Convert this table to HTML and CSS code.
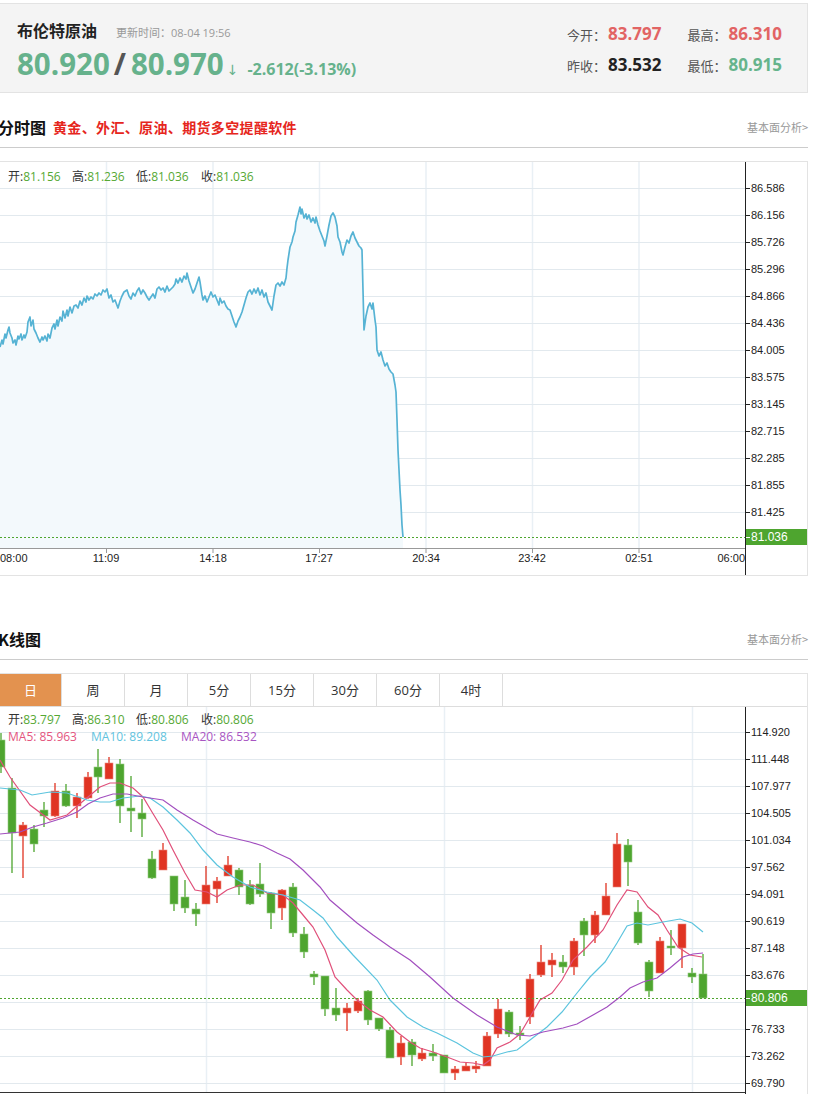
FILE: index.html
```html
<!DOCTYPE html>
<html lang="zh-CN">
<head>
<meta charset="utf-8">
<title>布伦特原油</title>
<link rel="stylesheet" href="styles.css">
</head>
<body>
<div class="page">
  <section class="quote">
    <div class="quote-left">
      <div class="title-row">
        <span class="name">布伦特原油</span>
        <span class="update">更新时间：08-04 19:56</span>
      </div>
      <div class="price-row">
        <span class="px">80.920</span><span class="slash">/</span><span class="px">80.970</span><span class="arrow">↓</span><span class="chg">-2.612(-3.13%)</span>
      </div>
    </div>
    <div class="quote-right">
      <div class="stat"><span class="lbl">今开：</span><span class="val red">83.797</span></div>
      <div class="stat"><span class="lbl">最高：</span><span class="val red">86.310</span></div>
      <div class="stat"><span class="lbl">昨收：</span><span class="val dark">83.532</span></div>
      <div class="stat"><span class="lbl">最低：</span><span class="val green">80.915</span></div>
    </div>
  </section>

  <div class="sec-bar">
    <div class="sec-left"><span class="sec-title">分时图</span><span class="sec-promo">黄金、外汇、原油、期货多空提醒软件</span></div>
    <span class="sec-link">基本面分析&gt;</span>
  </div>

  <div class="chart-box">
    <svg class="chart" width="807" height="413" viewBox="0 162 807 413">
      <path class="grid-v" d="M106.5,162V548 M213,162V548 M319.5,162V548 M426,162V548 M532.5,162V548 M639,162V548"/>
      <path class="grid-h" d="M0,188.5H745 M0,215.5H745 M0,242.5H745 M0,269.5H745 M0,296.5H745 M0,323.5H745 M0,350.5H745 M0,377.5H745 M0,404.5H745 M0,431.5H745 M0,458.5H745 M0,485.5H745 M0,512.5H745"/>
      <path class="area" d="M0,347 L2,340 3,344 5,334 6,338 8,330 9,327 10,333 12,338 13,343 15,340 16,345 18,336 19,339 21,334 22,340 24,335 25,338 27,332 28,322 30,317 31,326 33,320 34,329 36,333 38,338 40,342 42,337 43,340 45,336 47,341 48,334 50,338 52,328 54,324 55,329 57,320 58,326 60,317 62,321 63,311 65,318 67,310 68,316 70,307 72,313 74,306 76,305 78,308 80,301 82,305 84,298 86,302 87,296 89,300 91,297 93,299 95,294 97,296 99,293 101,295 103,290 105,292 107,289 109,298 111,295 113,302 115,300 118,308 120,301 122,296 124,292 127,290 129,296 131,299 133,293 135,296 137,291 139,288 141,294 143,290 145,293 147,297 149,300 151,297 153,294 155,298 157,289 159,287 161,290 163,288 165,292 167,286 169,291 171,289 173,287 175,284 176,279 178,283 180,278 182,282 184,276 186,279 187,273 189,281 191,287 193,293 195,289 197,283 199,277 200,282 202,295 203,300 205,296 207,302 209,297 211,292 213,297 215,295 217,300 219,305 220,298 222,303 224,301 226,306 228,309 230,310 232,316 234,322 236,327 238,321 240,317 242,312 244,305 246,298 248,292 250,290 252,294 254,289 256,293 258,288 260,295 262,290 264,297 266,293 268,302 270,306 272,310 274,296 276,285 278,283 280,286 282,282 284,285 286,278 287,268 288,260 290,247 292,242 293,237 295,231 296,222 298,215 300,207 301,214 302,209 304,218 306,214 307,219 309,215 311,222 313,218 315,223 316,217 318,225 320,231 322,236 324,241 325,246 327,236 329,225 331,216 333,213 335,217 337,226 338,237 340,242 342,252 343,255 345,247 347,240 349,243 351,236 353,232 355,238 357,242 359,246 361,248 362,250 363,290 364,330 366,316 368,307 370,303 372,309 373,303 375,320 376,327 377,350 379,356 381,352 383,360 385,366 387,363 389,369 391,372 393,374 395,385 396,392 397,420 398,450 399,470 400,490 401,505 402,525 403,537 L403,548 L0,548 Z"/>
      <polyline class="tline" points="0,347 2,340 3,344 5,334 6,338 8,330 9,327 10,333 12,338 13,343 15,340 16,345 18,336 19,339 21,334 22,340 24,335 25,338 27,332 28,322 30,317 31,326 33,320 34,329 36,333 38,338 40,342 42,337 43,340 45,336 47,341 48,334 50,338 52,328 54,324 55,329 57,320 58,326 60,317 62,321 63,311 65,318 67,310 68,316 70,307 72,313 74,306 76,305 78,308 80,301 82,305 84,298 86,302 87,296 89,300 91,297 93,299 95,294 97,296 99,293 101,295 103,290 105,292 107,289 109,298 111,295 113,302 115,300 118,308 120,301 122,296 124,292 127,290 129,296 131,299 133,293 135,296 137,291 139,288 141,294 143,290 145,293 147,297 149,300 151,297 153,294 155,298 157,289 159,287 161,290 163,288 165,292 167,286 169,291 171,289 173,287 175,284 176,279 178,283 180,278 182,282 184,276 186,279 187,273 189,281 191,287 193,293 195,289 197,283 199,277 200,282 202,295 203,300 205,296 207,302 209,297 211,292 213,297 215,295 217,300 219,305 220,298 222,303 224,301 226,306 228,309 230,310 232,316 234,322 236,327 238,321 240,317 242,312 244,305 246,298 248,292 250,290 252,294 254,289 256,293 258,288 260,295 262,290 264,297 266,293 268,302 270,306 272,310 274,296 276,285 278,283 280,286 282,282 284,285 286,278 287,268 288,260 290,247 292,242 293,237 295,231 296,222 298,215 300,207 301,214 302,209 304,218 306,214 307,219 309,215 311,222 313,218 315,223 316,217 318,225 320,231 322,236 324,241 325,246 327,236 329,225 331,216 333,213 335,217 337,226 338,237 340,242 342,252 343,255 345,247 347,240 349,243 351,236 353,232 355,238 357,242 359,246 361,248 362,250 363,290 364,330 366,316 368,307 370,303 372,309 373,303 375,320 376,327 377,350 379,356 381,352 383,360 385,366 387,363 389,369 391,372 393,374 395,385 396,392 397,420 398,450 399,470 400,490 401,505 402,525 403,537"/>
      <path class="dotted" d="M0,537.5H745"/>
      <path class="axis-x" d="M0,548.5H745 M106.5,548V553 M213,548V553 M319.5,548V553 M426,548V553 M532.5,548V553 M639,548V553"/>
      <text class="tick" y="562" x="0">08:00</text>
      <text class="tick mid" y="562" x="106">11:09</text>
      <text class="tick mid" y="562" x="213">14:18</text>
      <text class="tick mid" y="562" x="319">17:27</text>
      <text class="tick mid" y="562" x="426">20:34</text>
      <text class="tick mid" y="562" x="532">23:42</text>
      <text class="tick mid" y="562" x="639">02:51</text>
      <text class="tick end" y="562" x="745">06:00</text>
      <path class="axis-y" d="M745.5,162V575 M745,188.5H750 M745,215.5H750 M745,242.5H750 M745,269.5H750 M745,296.5H750 M745,323.5H750 M745,350.5H750 M745,377.5H750 M745,404.5H750 M745,431.5H750 M745,458.5H750 M745,485.5H750 M745,512.5H750"/>
      <text class="tick" x="751" y="192">86.586</text>
      <text class="tick" x="751" y="219">86.156</text>
      <text class="tick" x="751" y="246">85.726</text>
      <text class="tick" x="751" y="273">85.296</text>
      <text class="tick" x="751" y="300">84.866</text>
      <text class="tick" x="751" y="327">84.436</text>
      <text class="tick" x="751" y="354">84.005</text>
      <text class="tick" x="751" y="381">83.575</text>
      <text class="tick" x="751" y="408">83.145</text>
      <text class="tick" x="751" y="435">82.715</text>
      <text class="tick" x="751" y="462">82.285</text>
      <text class="tick" x="751" y="489">81.855</text>
      <text class="tick" x="751" y="516">81.425</text>
      <rect class="cur-box" x="746" y="529" width="61" height="16"/>
      <path class="cur-tick" d="M746,537.5H750"/>
      <text class="cur-text" x="751" y="541">81.036</text>
      <text class="info" y="181"><tspan x="8">开:</tspan><tspan class="iv">81.156</tspan><tspan x="72">高:</tspan><tspan class="iv">81.236</tspan><tspan x="136">低:</tspan><tspan class="iv">81.036</tspan><tspan x="201">收:</tspan><tspan class="iv">81.036</tspan></text>
    </svg>
  </div>

  <div class="sec-bar sec-bar-k">
    <div class="sec-left"><span class="sec-title">K线图</span></div>
    <span class="sec-link">基本面分析&gt;</span>
  </div>

  <div class="kbox">
    <div class="tabs">
      <span class="tab active">日</span>
      <span class="tab">周</span>
      <span class="tab">月</span>
      <span class="tab">5分</span>
      <span class="tab">15分</span>
      <span class="tab">30分</span>
      <span class="tab">60分</span>
      <span class="tab">4时</span>
    </div>
    <svg class="chart" width="807" height="400" viewBox="0 707 807 400">
      <path class="grid-v" d="M206.5,707V1092 M444.5,707V1092 M692.5,707V1092"/>
      <path class="grid-h" d="M0,732.5H745 M0,759.5H745 M0,786.5H745 M0,813.5H745 M0,840.5H745 M0,867.5H745 M0,894.5H745 M0,921.5H745 M0,948.5H745 M0,975.5H745 M0,1002.5H745 M0,1029.5H745 M0,1056.5H745 M0,1083.5H745"/>
      <g class="k-up">
        <path d="M23,822V878 M55,783V817 M77,793V818 M88,772V799 M109,757V779 M163,843V870 M206,866V904 M217,877V903 M228,856V876 M282,889V920 M347,1003V1031 M358,998V1013 M401,1036V1065 M422,1048V1061 M455,1066V1080 M466,1063V1071 M476,1061V1073 M487,1032V1066 M498,999V1038 M530,974V1024 M541,945V977 M552,953V977 M574,938V975 M595,911V943 M606,883V915 M617,833V887 M660,937V973 M682,924V968"/>
        <rect x="19" y="825" width="8" height="11"/>
        <rect x="51" y="791" width="8" height="25"/>
        <rect x="73" y="797" width="8" height="9"/>
        <rect x="84" y="777" width="8" height="21"/>
        <rect x="105" y="763" width="8" height="16"/>
        <rect x="159" y="850" width="8" height="20"/>
        <rect x="202" y="885" width="8" height="19"/>
        <rect x="213" y="881" width="8" height="8"/>
        <rect x="224" y="865" width="8" height="11"/>
        <rect x="278" y="890" width="8" height="18"/>
        <rect x="343" y="1008" width="8" height="5"/>
        <rect x="354" y="1001" width="8" height="10"/>
        <rect x="397" y="1043" width="8" height="14"/>
        <rect x="418" y="1053" width="8" height="6"/>
        <rect x="451" y="1069" width="8" height="4"/>
        <rect x="462" y="1066" width="8" height="5"/>
        <rect x="472" y="1066" width="8" height="3"/>
        <rect x="483" y="1036" width="8" height="30"/>
        <rect x="494" y="1009" width="8" height="25"/>
        <rect x="526" y="979" width="8" height="38"/>
        <rect x="537" y="962" width="8" height="13"/>
        <rect x="548" y="960" width="8" height="5"/>
        <rect x="570" y="941" width="8" height="26"/>
        <rect x="591" y="915" width="8" height="20"/>
        <rect x="602" y="896" width="8" height="19"/>
        <rect x="613" y="844" width="8" height="43"/>
        <rect x="656" y="941" width="8" height="32"/>
        <rect x="678" y="924" width="8" height="24"/>
      </g>
      <g class="k-dn">
        <path d="M1,733V773 M12,778V873 M34,825V852 M44,802V827 M66,784V807 M98,749V793 M120,759V823 M131,776V832 M142,799V837 M152,851V879 M174,876V911 M185,880V913 M196,903V926 M239,868V895 M250,880V905 M260,863V897 M271,892V929 M293,883V937 M304,927V958 M314,971V985 M325,976V1016 M336,988V1021 M368,990V1025 M379,1018V1031 M390,1027V1058 M412,1039V1066 M433,1044V1061 M444,1055V1073 M509,1010V1037 M520,1026V1040 M563,955V973 M584,918V956 M628,839V886 M638,900V945 M649,960V997 M671,930V955 M692,968V983 M703,954V998"/>
        <rect x="-3" y="740" width="8" height="27"/>
        <rect x="8" y="788" width="8" height="45"/>
        <rect x="30" y="829" width="8" height="15"/>
        <rect x="40" y="810" width="8" height="6"/>
        <rect x="62" y="791" width="8" height="15"/>
        <rect x="94" y="767" width="8" height="10"/>
        <rect x="116" y="764" width="8" height="42"/>
        <rect x="127" y="808" width="8" height="3"/>
        <rect x="138" y="813" width="8" height="6"/>
        <rect x="148" y="859" width="8" height="19"/>
        <rect x="170" y="876" width="8" height="28"/>
        <rect x="181" y="897" width="8" height="11"/>
        <rect x="192" y="909" width="8" height="5"/>
        <rect x="235" y="870" width="8" height="17"/>
        <rect x="246" y="885" width="8" height="19"/>
        <rect x="256" y="884" width="8" height="10"/>
        <rect x="267" y="893" width="8" height="20"/>
        <rect x="289" y="887" width="8" height="46"/>
        <rect x="300" y="934" width="8" height="18"/>
        <rect x="310" y="974" width="8" height="3"/>
        <rect x="321" y="976" width="8" height="33"/>
        <rect x="332" y="1008" width="8" height="7"/>
        <rect x="364" y="991" width="8" height="29"/>
        <rect x="375" y="1018" width="8" height="11"/>
        <rect x="386" y="1030" width="8" height="28"/>
        <rect x="408" y="1042" width="8" height="13"/>
        <rect x="429" y="1053" width="8" height="3"/>
        <rect x="440" y="1055" width="8" height="18"/>
        <rect x="505" y="1012" width="8" height="22"/>
        <rect x="516" y="1033" width="8" height="2"/>
        <rect x="559" y="962" width="8" height="5"/>
        <rect x="580" y="921" width="8" height="14"/>
        <rect x="624" y="845" width="8" height="17"/>
        <rect x="634" y="912" width="8" height="31"/>
        <rect x="645" y="962" width="8" height="29"/>
        <rect x="667" y="946" width="8" height="2"/>
        <rect x="688" y="973" width="8" height="4"/>
        <rect x="699" y="974" width="8" height="24"/>
      </g>
      <polyline class="ma5" points="0,760 10,777 30,805 50,820 67,815 82,802 100,787 110,783 120,783 133,788 143,797 152,812 163,830 173,850 185,873 195,890 207,892 217,897 227,890 240,885 253,885 267,893 283,895 293,903 303,915 313,927 325,950 335,977 347,990 357,1000 370,1010 383,1017 397,1032 410,1042 420,1048 433,1052 447,1057 460,1062 473,1063 483,1065 490,1060 497,1048 510,1042 520,1034 530,1017 540,1000 552,993 562,980 573,960 587,947 603,930 617,905 627,890 637,892 648,907 658,915 667,930 678,947 690,955 702,957"/>
      <polyline class="ma10" points="0,788 20,790 32,795 50,792 67,793 87,800 100,802 110,802 123,798 140,796 150,798 163,807 177,820 190,833 203,850 217,865 233,877 250,887 267,892 283,895 300,900 313,910 323,918 337,937 353,955 377,980 390,1000 407,1017 423,1027 437,1033 457,1043 473,1053 483,1057 493,1056 507,1052 517,1050 530,1040 547,1027 562,1012 577,993 590,977 605,962 617,943 627,926 637,923 648,925 663,922 680,919 692,923 703,932"/>
      <polyline class="ma20" points="0,834 20,832 33,827 47,823 63,818 77,812 88,804 100,798 113,794 127,794 143,797 163,800 177,810 193,820 207,828 217,834 233,838 250,842 263,846 277,853 290,859 303,870 320,887 330,900 357,923 373,935 390,947 410,960 430,977 453,998 477,1015 497,1027 517,1035 530,1036 543,1032 563,1028 577,1024 593,1015 607,1007 620,997 630,988 643,982 657,978 670,968 683,957 693,954 703,953"/>
      <path class="dotted" d="M0,998.5H745"/>
      <path class="axis-dark" d="M0,1092.5H745"/>
      <path class="axis-y" d="M745.5,707V1107 M745,732.5H750 M745,759.5H750 M745,786.5H750 M745,813.5H750 M745,840.5H750 M745,867.5H750 M745,894.5H750 M745,921.5H750 M745,948.5H750 M745,975.5H750 M745,1029.5H750 M745,1056.5H750 M745,1083.5H750"/>
      <text class="tick" x="751" y="736">114.920</text>
      <text class="tick" x="751" y="763">111.448</text>
      <text class="tick" x="751" y="790">107.977</text>
      <text class="tick" x="751" y="817">104.505</text>
      <text class="tick" x="751" y="844">101.034</text>
      <text class="tick" x="751" y="871">97.562</text>
      <text class="tick" x="751" y="898">94.091</text>
      <text class="tick" x="751" y="925">90.619</text>
      <text class="tick" x="751" y="952">87.148</text>
      <text class="tick" x="751" y="979">83.676</text>
      <text class="tick" x="751" y="1033">76.733</text>
      <text class="tick" x="751" y="1060">73.262</text>
      <text class="tick" x="751" y="1087">69.790</text>
      <rect class="cur-box" x="746" y="990" width="61" height="16"/>
      <path class="cur-tick" d="M746,998.5H750"/>
      <text class="cur-text" x="751" y="1002">80.806</text>
      <text class="info" y="724"><tspan x="8">开:</tspan><tspan class="iv">83.797</tspan><tspan x="72">高:</tspan><tspan class="iv">86.310</tspan><tspan x="136">低:</tspan><tspan class="iv">80.806</tspan><tspan x="201">收:</tspan><tspan class="iv">80.806</tspan></text>
      <text class="info" y="741"><tspan x="8" class="t-ma5">MA5: 85.963</tspan><tspan x="91" class="t-ma10">MA10: 89.208</tspan><tspan x="181" class="t-ma20">MA20: 86.532</tspan></text>
    </svg>
  </div>
</div>
</body>
</html>
```

FILE: styles.css
```css
html, body {
  margin: 0;
  padding: 0;
  overflow: hidden;
  background: #fff;
}

body {
  font-family: "Open Sans", "Noto Sans CJK SC", sans-serif;
  color: #333;
}

.page {
  width: 808px;
  padding-top: 3px;
}

/* ---------- quote header ---------- */
.quote {
  box-sizing: border-box;
  height: 90px;
  background: #f4f4f4;
  border: 1px solid #e3e3e3;
  border-left: none;
  display: flex;
  justify-content: space-between;
}

.quote-left {
  padding: 15px 0 0 17px;
}

.title-row {
  display: flex;
  align-items: baseline;
  height: 24px;
  line-height: 24px;
}

.name {
  font-size: 16px;
  font-weight: 700;
  color: #222;
}

.update {
  font-size: 11px;
  color: #999;
  margin-left: 19px;
}

.price-row {
  display: flex;
  align-items: baseline;
  margin-top: 5px;
  height: 32px;
  line-height: 32px;
}

.px {
  font-size: 29.5px;
  font-weight: 700;
  color: #66b28c;
}

.slash {
  font-size: 29.5px;
  font-weight: 700;
  color: #555;
  margin: 0 5px 0 4px;
}

.arrow {
  font-family: "DejaVu Sans", sans-serif;
  font-size: 14px;
  color: #66b28c;
  margin-left: 3px;
}

.chg {
  font-size: 16px;
  font-weight: 700;
  color: #66b28c;
  margin-left: 9px;
}

.quote-right {
  display: grid;
  grid-template-columns: auto auto;
  column-gap: 26px;
  align-content: start;
  padding: 14px 25px 0 0;
}

.stat {
  display: flex;
  align-items: baseline;
  line-height: 31px;
  height: 31px;
}

.lbl {
  font-size: 13px;
  color: #555;
}

.val {
  font-size: 17px;
  font-weight: 700;
  margin-left: 2px;
}

.red { color: #e26464; }
.dark { color: #222; }
.green { color: #66b48c; }

/* ---------- section bars ---------- */
.sec-bar {
  display: flex;
  justify-content: space-between;
  align-items: center;
  height: 40px;
  border-bottom: 1px solid #cccccc;
  margin-top: 14px;
}

.sec-bar-k {
  margin-top: 43px;
}

.sec-left {
  display: flex;
  align-items: center;
}

.sec-title {
  font-family: "Noto Sans CJK SC", sans-serif;
  font-size: 16px;
  font-weight: 700;
  color: #111;
  margin-left: -2px;
}

.sec-promo {
  font-family: "Noto Sans CJK SC", sans-serif;
  font-size: 14px;
  font-weight: 700;
  color: #e6261d;
  margin-left: 7px;
  letter-spacing: 0.35px;
}

.sec-link {
  font-family: "Noto Sans CJK SC", sans-serif;
  font-size: 11px;
  color: #999;
}

/* ---------- chart boxes ---------- */
.chart-box,
.kbox {
  width: 807px;
  margin-top: 13px;
  border: 1px solid #e3e3e3;
  border-left: none;
}

.chart {
  display: block;
}

.tabs {
  display: flex;
  height: 32px;
  border-bottom: 1px solid #dddddd;
}

.tab {
  box-sizing: border-box;
  width: 63px;
  border-right: 1px solid #dddddd;
  text-align: center;
  font-family: "Open Sans", "Noto Sans CJK SC", sans-serif;
  font-size: 13px;
  line-height: 32px;
  color: #333;
}

.tab.active {
  width: 62px;
  background: #e3924f;
  color: #fff;
}

/* ---------- svg parts ---------- */
.grid-v {
  stroke: #e9f0f5;
  stroke-width: 1.5;
  fill: none;
}

.grid-h {
  stroke: #e2e9ee;
  stroke-width: 1;
  fill: none;
}

.area {
  fill: #f3f9fc;
  stroke: none;
}

.tline {
  fill: none;
  stroke: #56b3d4;
  stroke-width: 1.7;
  stroke-linejoin: round;
}

.dotted {
  stroke: #4fa52f;
  stroke-width: 1;
  stroke-dasharray: 2 2;
  fill: none;
}

.axis-x {
  stroke: #999;
  stroke-width: 1;
  fill: none;
}

.axis-dark {
  stroke: #333;
  stroke-width: 1.2;
  fill: none;
}

.axis-y {
  stroke: #222;
  stroke-width: 1;
  fill: none;
}

.tick {
  font-family: "Liberation Sans", Arial, sans-serif;
  font-size: 11px;
  fill: #222;
}

.tick.mid { text-anchor: middle; }
.tick.end { text-anchor: end; }

.cur-box {
  fill: #4ea52f;
}

.cur-tick {
  stroke: #fff;
  stroke-width: 1;
}

.cur-text {
  font-family: "Liberation Sans", Arial, sans-serif;
  font-size: 12px;
  fill: #fff;
}

.info {
  font-family: "Open Sans", "Noto Sans CJK SC", sans-serif;
  font-size: 12px;
  fill: #333;
}

.iv { fill: #55a834; }
.t-ma5 { fill: #e4557e; }
.t-ma10 { fill: #62c3de; }
.t-ma20 { fill: #a855c2; }

.k-up path { stroke: #e03423; stroke-width: 1.3; fill: none; }
.k-up rect { fill: #e03423; stroke: #eb8a80; stroke-width: 0.6; }
.k-dn path { stroke: #4ea52f; stroke-width: 1.3; fill: none; }
.k-dn rect { fill: #4ea52f; stroke: #94c97f; stroke-width: 0.6; }

.ma5 { fill: none; stroke: #e0507a; stroke-width: 1.2; }
.ma10 { fill: none; stroke: #5cc4de; stroke-width: 1.2; }
.ma20 { fill: none; stroke: #a24fbf; stroke-width: 1.2; }
```
